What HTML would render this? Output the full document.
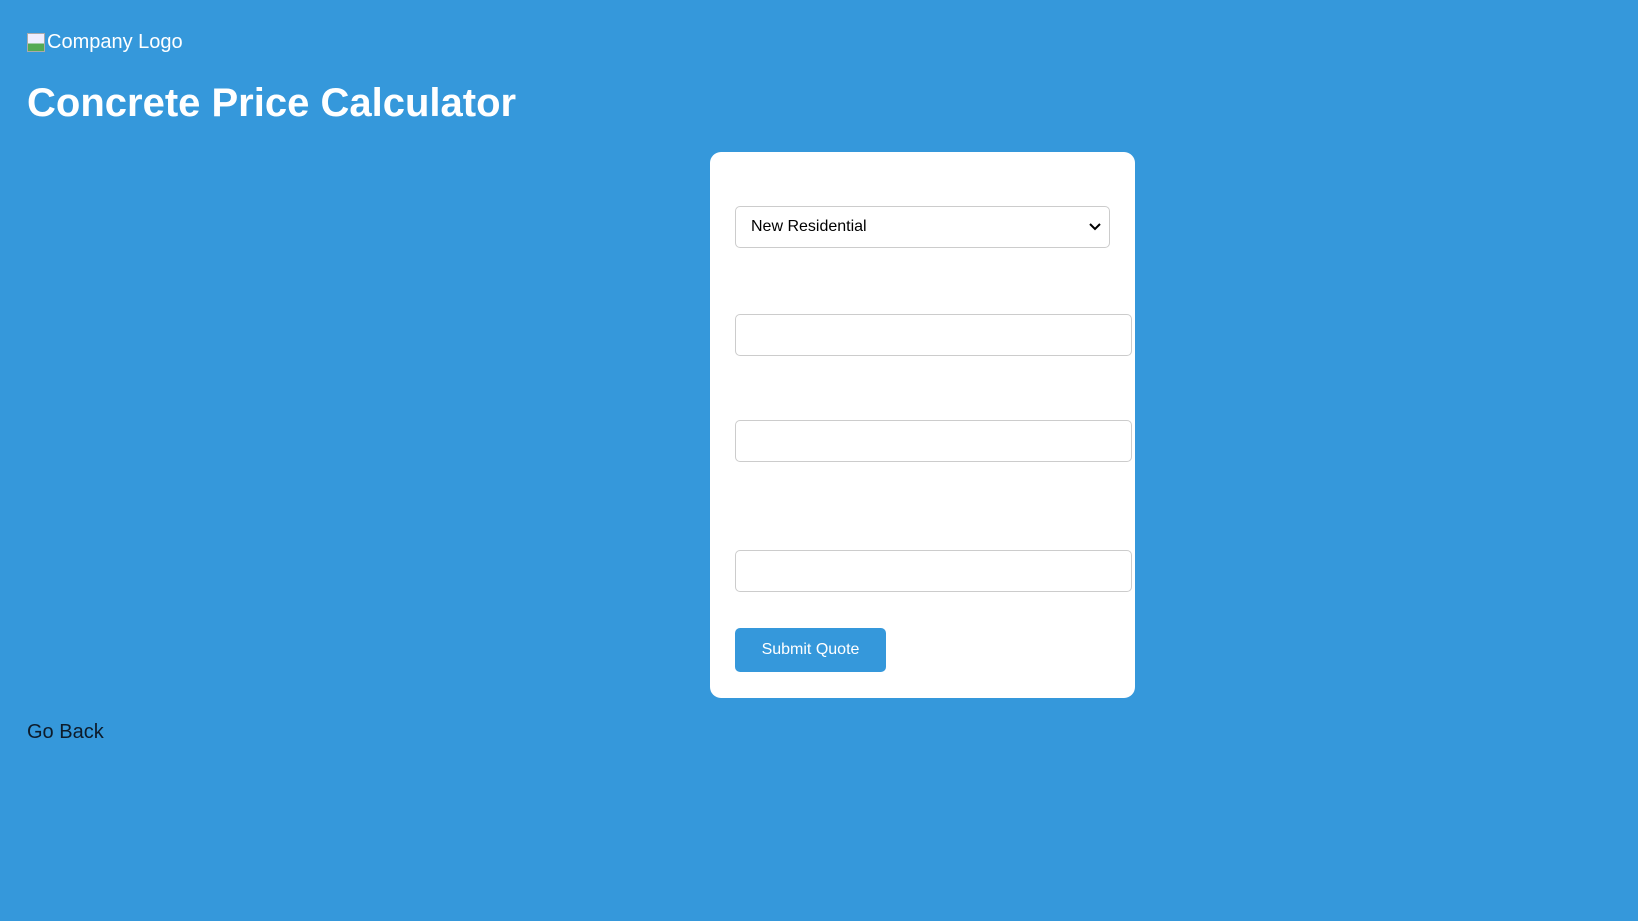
<!DOCTYPE html>
<html><head><meta charset="utf-8"><style>
html,body{margin:0;padding:0}
body{width:1638px;height:921px;background:#3598db;font-family:"Liberation Sans",Arial,sans-serif;position:relative;overflow:hidden}
.logo{position:absolute;left:27px;top:30px;color:#fff;font-size:20px;line-height:24px;display:flex;align-items:center}
.logo i{display:inline-block;width:18px;height:19px;border:1px solid #aaa;background:linear-gradient(#eef 55%,#5a5 55%);box-sizing:border-box;margin-right:2px}
h1{position:absolute;left:27px;top:78px;margin:0;color:#fff;font-size:40px;line-height:50px;font-weight:bold}
.card{position:absolute;left:710px;top:152px;width:425px;height:546px;background:#fff;border-radius:11px}
.f{position:absolute;left:25px;width:397px;height:42px;border:1px solid #ccc;border-radius:5px;box-sizing:border-box;background:#fff}
.sel{width:375px;top:54px;font-size:16px;line-height:40px;padding-left:15px;color:#000}
.sel svg{position:absolute;right:8px;top:15px}
.btn{position:absolute;left:25px;top:476px;width:151px;height:44px;background:#3598db;color:#fff;border-radius:5px;font-size:16px;line-height:44px;text-align:center}
.back{position:absolute;left:27px;top:720px;font-size:20px;line-height:24px;color:#0d1b2a}
</style></head><body>
<div class="logo"><i></i>Company Logo</div>
<h1>Concrete Price Calculator</h1>
<div class="card">
<div class="f sel">New Residential<svg width="12" height="10" viewBox="0 0 12 10"><path d="M1 2l5 5 5-5" stroke="#000" stroke-width="2" fill="none"/></svg></div>
<div class="f" style="top:162px"></div>
<div class="f" style="top:268px"></div>
<div class="f" style="top:398px"></div>
<div class="btn">Submit Quote</div>
</div>
<div class="back">Go Back</div>
</body></html>
